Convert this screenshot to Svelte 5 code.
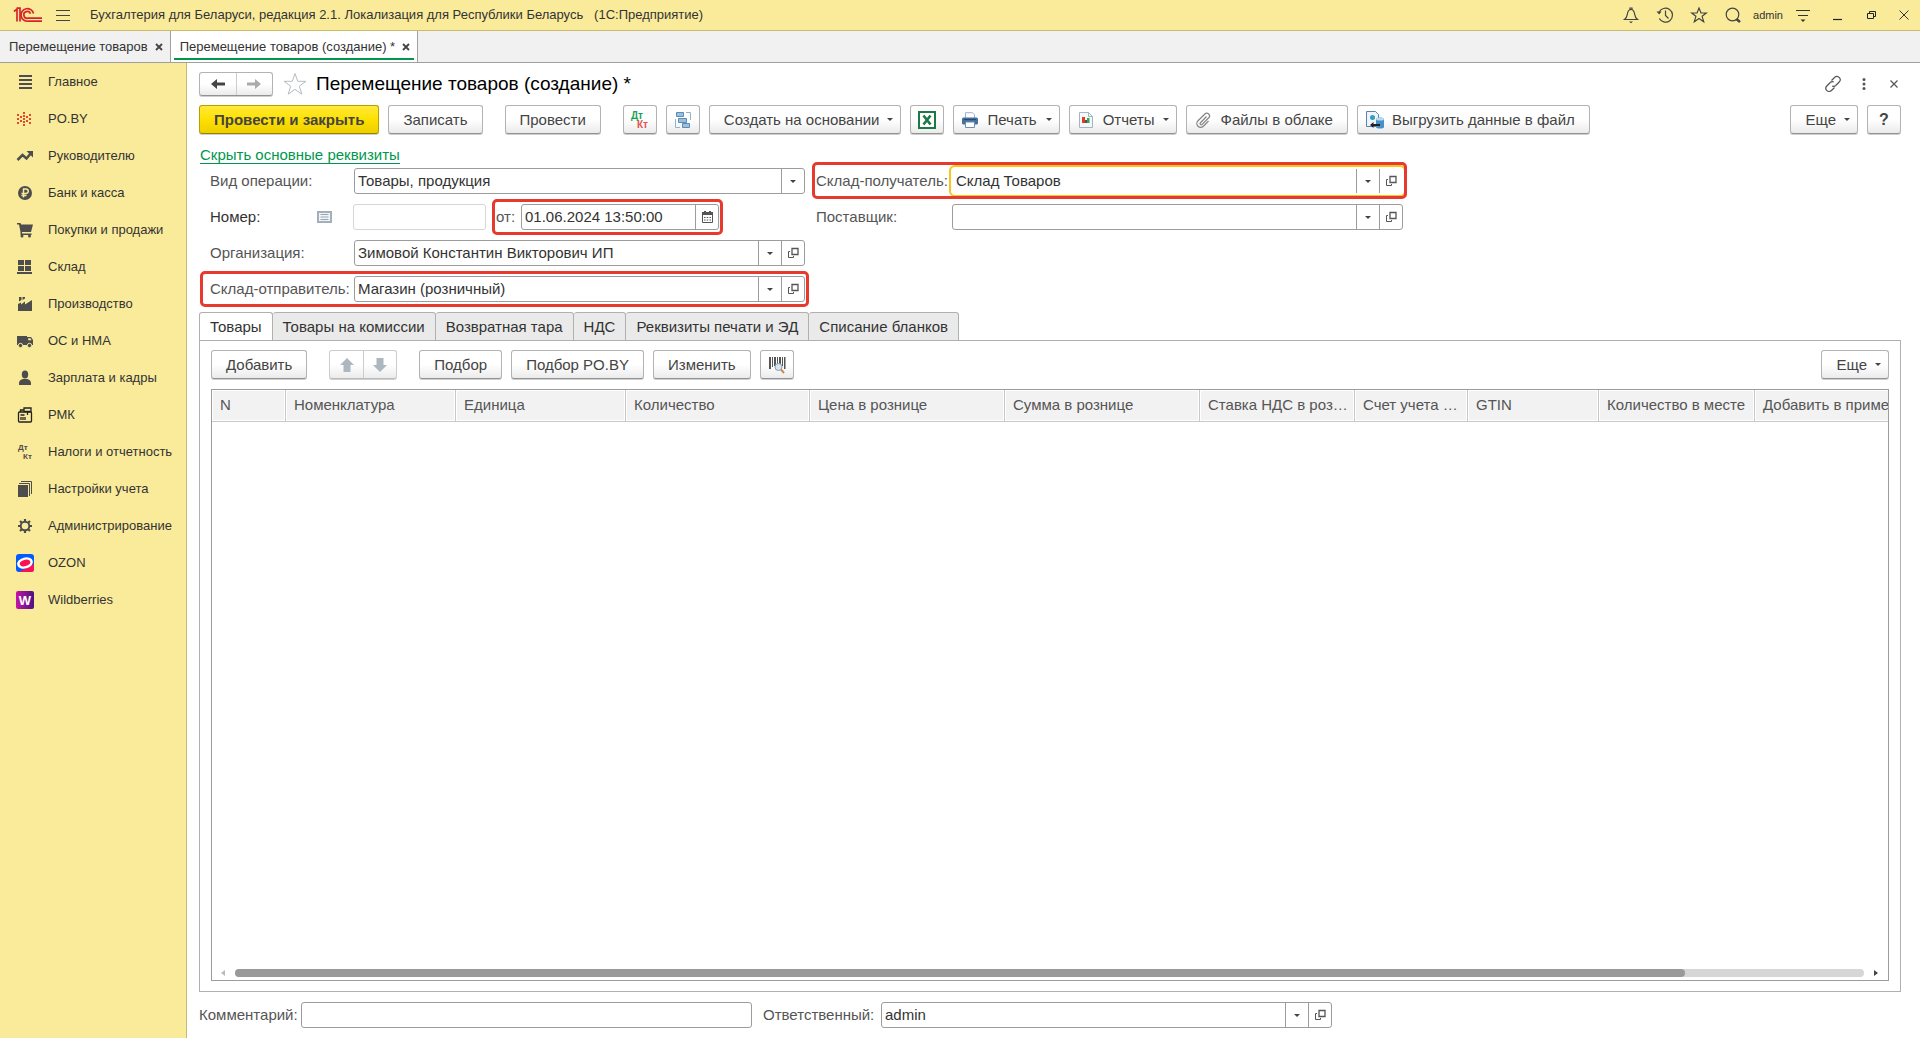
<script>
  const sections = [
    ['main', 'Главное'],
    ['poby', 'PO.BY'],
    ['chart', 'Руководителю'],
    ['ruble', 'Банк и касса'],
    ['cart', 'Покупки и продажи'],
    ['stock', 'Склад'],
    ['factory', 'Производство'],
    ['truck', 'ОС и НМА'],
    ['person', 'Зарплата и кадры'],
    ['till', 'РМК'],
    ['dtkt', 'Налоги и отчетность'],
    ['books', 'Настройки учета'],
    ['gear', 'Администрирование'],
    ['ozon', 'OZON'],
    ['wb', 'Wildberries'],
  ];
  const pages = ['Товары', 'Товары на комиссии', 'Возвратная тара', 'НДС', 'Реквизиты печати и ЭД', 'Списание бланков'];
  const columns = [
    ['N', 74], ['Номенклатура', 170], ['Единица', 170], ['Количество', 184],
    ['Цена в рознице', 195], ['Сумма в рознице', 195], ['Ставка НДС в рознице', 155],
    ['Счет учета НДС', 113], ['GTIN', 131], ['Количество в месте', 156], ['Добавить в примечание', 348],
  ];
  const tableWidth = columns.reduce((sum, c) => sum + c[1], 0);
  let page = $state('Товары');
  let operation = $state('Товары, продукция');
  let date = $state('01.06.2024 13:50:00');
  let organization = $state('Зимовой Константин Викторович ИП');
  let sender = $state('Магазин (розничный)');
  let receiver = $state('Склад Товаров');
  let responsible = $state('admin');
</script>

{#snippet icon(name)}
  {#if name === 'main'}
    <svg width="24" height="24" viewBox="0 0 24 24" fill="#4d4d4d"><path d="M6 5h13v2H6zM6 9h13v2H6zM6 13h13v2H6zM6 17h13v2H6z" /></svg>
  {:else if name === 'poby'}
    <svg width="24" height="24" viewBox="0 0 24 24" fill="#e0492c"><path d="M10 5h2v2h-2zM10 8h2v2h-2zM10 11h2v2h-2zM10 14h2v2h-2zM10 17h2v2h-2zM7 9h2v2H7zM7 13h2v2H7zM13 9h2v2h-2zM13 13h2v2h-2zM4 7h2v2H4zM4 11h2v2H4zM4 15h2v2H4zM16 7h2v2h-2zM16 11h2v2h-2zM16 15h2v2h-2z" /></svg>
  {:else if name === 'chart'}
    <svg width="24" height="24" viewBox="0 0 24 24"><path d="M4.500 16l5-5 4 3.500 5-6" fill="none" stroke="#4d4d4d" stroke-width="2.500" /><path d="M13.500 7H20v6.500z" fill="#4d4d4d" /></svg>
  {:else if name === 'ruble'}
    <svg width="24" height="24" viewBox="0 0 24 24"><circle cx="12" cy="12" r="7" fill="#4d4d4d" /><path d="M10.500 16.500V8h2.500a2.200 2.200 0 0 1 0 4.500H8.500M8.500 14.500h5" fill="none" stroke="#faeb9b" stroke-width="1.500" /></svg>
  {:else if name === 'cart'}
    <svg width="24" height="24" viewBox="0 0 24 24" fill="#4d4d4d"><path d="M4 5h3.500l.6 1.500H20L18 14H9v1.500h9.500V17H7.500v-3L6 6.500H4z" /><circle cx="9" cy="18" r="1.500" /><circle cx="16.500" cy="18" r="1.500" /></svg>
  {:else if name === 'stock'}
    <svg width="24" height="24" viewBox="0 0 24 24" fill="#4d4d4d"><path d="M5 5h6v5H5zM12 5h6v5h-6zM5 11h6v5H5zM12 11h6v5h-6zM4 17h15v2H4z" /></svg>
  {:else if name === 'factory'}
    <svg width="24" height="24" viewBox="0 0 24 24" fill="#4d4d4d"><path d="M5 19v-7l3-1.500V12.500l4-3v3l7-4.500v11zM6 5h2.500v3L6 9.500zM9.500 5H12v1.500L9.500 8z" /></svg>
  {:else if name === 'truck'}
    <svg width="24" height="24" viewBox="0 0 24 24" fill="#4d4d4d"><path d="M4 7h10v9H4zM14 8h4l2 3v5h-6z" /><circle cx="7.500" cy="16.500" r="2.200" stroke="#faeb9b" /><circle cx="16.500" cy="16.500" r="2.200" stroke="#faeb9b" /><path d="M15.200 9.200h2.300l1 2h-3.300z" fill="#faeb9b" /></svg>
  {:else if name === 'person'}
    <svg width="24" height="24" viewBox="0 0 24 24" fill="#4d4d4d"><ellipse cx="12" cy="8.500" rx="3.200" ry="4" /><path d="M6 19v-2c0-2.500 2-3.500 4-4h4c2 .5 4 1.500 4 4v2z" /></svg>
  {:else if name === 'till'}
    <svg width="24" height="24" viewBox="0 0 24 24" fill="none" stroke="#222" stroke-width="1.300"><rect x="5.500" y="9" width="13" height="10" rx="1" /><path d="M11 5h7v3.500h-7zM14.500 8.500V12M7.500 9V7H11M7.500 12h4M8 14v3M10 14v3M12 14v3" /></svg>
  {:else if name === 'dtkt'}
    <svg width="24" height="24" viewBox="0 0 24 24" fill="#4d4d4d" class="mono"><text x="5" y="10">Дт</text><text x="10" y="19">Кт</text></svg>
  {:else if name === 'books'}
    <svg width="24" height="24" viewBox="0 0 24 24" fill="#4d4d4d"><path d="M5 8h10v12H5z" /><path d="M6 6.500h10.500V19M8 4.500h10.500V17" fill="none" stroke="#4d4d4d" /></svg>
  {:else if name === 'gear'}
    <svg width="24" height="24" viewBox="0 0 24 24" fill="none" stroke="#4d4d4d"><circle cx="12" cy="12" r="4.300" stroke-width="2" /><path d="M12 5v2.500M12 16.500V19M5 12h2.500M16.500 12H19M7 7l1.800 1.800M15.200 15.200L17 17M17 7l-1.800 1.800M8.800 15.200L7 17" stroke-width="2.200" /></svg>
  {:else if name === 'ozon'}
    <svg width="24" height="24" viewBox="0 0 24 24"><rect x="3" y="3" width="18" height="18" rx="3" fill="#005bff" /><path d="M21 13v5a3 3 0 0 1-3 3H6z" fill="#f91155" /><ellipse cx="12" cy="12" rx="8" ry="5.500" fill="#fff" transform="rotate(-14 12 12)" /><ellipse cx="12" cy="12" rx="5.500" ry="3.200" fill="#f91155" transform="rotate(-14 12 12)" /></svg>
  {:else if name === 'wb'}
    <svg width="24" height="24" viewBox="0 0 24 24"><defs><linearGradient id="wbg"><stop stop-color="#c713a5" /><stop offset="1" stop-color="#4a1380" /></linearGradient></defs><rect x="3" y="3" width="18" height="18" rx="2" fill="url(#wbg)" /><text x="12" y="17" text-anchor="middle" class="wb">W</text></svg>
  {:else if name === 'drop'}
    <svg width="6" height="3" viewBox="0 0 6 3"><path d="M0 0h6L3 3z" fill="#444" /></svg>
  {:else if name === 'open'}
    <svg width="12" height="12" viewBox="0 0 12 12" fill="none" stroke="#555"><path d="M5 1.500h6v6H5z" stroke-width="1.300" /><path d="M3 4.500H1.500v6h5V9" /></svg>
  {/if}
{/snippet}

{#snippet combo(open)}
  <button class="part" aria-label="Выбрать">{@render icon('drop')}</button>
  {#if open}<button class="part" aria-label="Открыть">{@render icon('open')}</button>{/if}
{/snippet}

<div class="app">
  <header class="titlebar">
    <svg class="logo" width="30" height="16" viewBox="0 0 30 16" fill="none" stroke="#d8232a" stroke-width="1.700"><path d="M1 4.500l3-2.500v12.500M3.500 1.200H7v13.300" /><path d="M20.500 6.500A6.300 6.300 0 1 0 15 14.200h14" /><path d="M17.500 6.800A3.400 3.400 0 1 0 15 11.200h14" /></svg>
    <button class="bare" aria-label="Меню"><svg width="16" height="14" viewBox="0 0 16 14" stroke="#444" stroke-width="1"><path d="M1 2.500h14M1 7.500h14M1 12.500h14" /></svg></button>
    <span class="apptitle">Бухгалтерия для Беларуси, редакция 2.1. Локализация для Республики Беларусь &nbsp; (1С:Предприятие)</span>
    <div class="sys">
      <button class="bare" aria-label="Уведомления"><svg width="20" height="20" viewBox="0 0 20 20" fill="none" stroke="#444" stroke-width="1.200"><path d="M3.500 14.500c2.500-2 2.500-3 3-6C7 5.500 8.500 4.500 10 4.500s3 1 3.500 4c.5 3 .5 4 3 6zM9 4.500V3h2v1.500" /><path d="M8 16.500h4l-2 1.700z" fill="#444" stroke="none" /></svg></button>
      <button class="bare" aria-label="История"><svg width="20" height="20" viewBox="0 0 20 20" fill="none" stroke="#444" stroke-width="1.200"><path d="M4 7.500a7 7 0 1 1 .3 6M10.500 5.500v5l3 3" /><path d="M1.500 6.500h5l-2.300 3z" fill="#444" stroke="none" /></svg></button>
      <button class="bare" aria-label="Избранное"><svg width="20" height="20" viewBox="0 0 20 20" fill="none" stroke="#444" stroke-width="1.200"><path d="M10 3l2 5h5.300l-4.200 3.300 1.600 5.400-4.700-3.200-4.700 3.200 1.600-5.400L2.700 8H8z" /></svg></button>
      <button class="bare" aria-label="Поиск"><svg width="20" height="20" viewBox="0 0 20 20" fill="none" stroke="#444" stroke-width="1.200"><circle cx="9.500" cy="9.500" r="6.300" /><path d="M13.500 14l3.500 3.200" stroke-width="2.500" /></svg></button>
      <button class="bare user">admin</button>
      <button class="bare" aria-label="Настройки"><svg width="16" height="16" viewBox="0 0 16 16"><path d="M1 3.500h14M3 8.500h10" stroke="#333" stroke-width="1.200" /><path d="M5.500 12.500h5L8 15z" fill="#333" /></svg></button>
      <button class="bare" aria-label="Свернуть"><svg width="16" height="16" viewBox="0 0 16 16" stroke="#222"><path d="M4 12.500h9" stroke-width="1.200" /></svg></button>
      <button class="bare" aria-label="Восстановить"><svg width="16" height="16" viewBox="0 0 16 16" fill="none" stroke="#222"><path d="M4.500 6.500h6v5h-6zM6.500 6.500v-2h6v5h-2" /></svg></button>
      <button class="bare last" aria-label="Закрыть"><svg width="16" height="16" viewBox="0 0 16 16" stroke="#333"><path d="M3.500 3.500l9 9M12.500 3.500l-9 9" /></svg></button>
    </div>
  </header>

  <nav class="windows">
    <div class="win"><a href="#list">Перемещение товаров</a><button class="bare" aria-label="Закрыть вкладку"><svg width="8" height="8" viewBox="0 0 8 8" stroke="#444" stroke-width="1.800"><path d="M1 1l6 6M7 1L1 7" /></svg></button></div>
    <div class="win current"><a href="#new">Перемещение товаров (создание) *</a><button class="bare" aria-label="Закрыть вкладку"><svg width="8" height="8" viewBox="0 0 8 8" stroke="#444" stroke-width="1.800"><path d="M1 1l6 6M7 1L1 7" /></svg></button></div>
  </nav>

  <div class="body">
    <nav class="sections">
      {#each sections as [name, title]}
        <a href="#{name}">{@render icon(name)}<span>{title}</span></a>
      {/each}
    </nav>

    <main>
      <div class="heading">
        <div class="pair nav">
          <button aria-label="Назад"><svg width="14" height="12" viewBox="0 0 14 12" fill="#444"><path d="M0 6l6-5v3.500h8v3H6V11z" /></svg></button>
          <button aria-label="Вперед"><svg width="14" height="12" viewBox="0 0 14 12" fill="#aaa"><path d="M14 6L8 1v3.500H0v3h8V11z" /></svg></button>
        </div>
        <button class="bare" aria-label="В избранное"><svg width="24" height="24" viewBox="0 0 24 24" fill="none" stroke="#b4bcc4"><path d="M12 1.500l2.700 7.800H23l-6.700 4.900 2.500 8-6.800-4.900-6.800 4.900 2.500-8L1 9.300h8.300z" /></svg></button>
        <h1>Перемещение товаров (создание) *</h1>
        <div class="formtools">
          <button class="bare" aria-label="Ссылка"><svg width="18" height="18" viewBox="0 0 18 18" fill="none" stroke="#555" stroke-width="1.200"><path d="M7.500 5.500l3-3a3.200 3.200 0 0 1 4.700 4.500l-3.500 3.500a3 3 0 0 1-3.500.4M10.500 12.500l-3 3A3.200 3.200 0 0 1 2.800 11l3.500-3.500a3 3 0 0 1 3.500-.4" /></svg></button>
          <button class="bare" aria-label="Действия"><svg width="4" height="12" viewBox="0 0 4 12" fill="#555"><circle cx="2" cy="1.500" r="1.500" /><circle cx="2" cy="6" r="1.500" /><circle cx="2" cy="10.500" r="1.500" /></svg></button>
          <button class="bare" aria-label="Закрыть форму"><svg width="8" height="8" viewBox="0 0 8 8" stroke="#555" stroke-width="1.200"><path d="M.5 .5l7 7M7.500 .5l-7 7" /></svg></button>
        </div>
      </div>

      <div class="bar">
        <button class="btn primary">Провести и закрыть</button>
        <button class="btn">Записать</button>
        <button class="btn apart">Провести</button>
        <button class="btn square apart" aria-label="Дебет и кредит"><svg width="20" height="20" viewBox="0 0 20 20" class="dk"><text x="1" y="9" fill="#1a9f57">Дт</text><text x="7" y="18" fill="#e2574c">Кт</text></svg></button>
        <button class="btn square" aria-label="Структура подчиненности"><svg width="18" height="18" viewBox="0 0 18 18" fill="#9cc0dc" stroke="#5b8db8"><path d="M2.500 1.500h7v4h-7zM4.500 7.500h8v4h-8zM8.500 12.500h7v4h-7z" /><path d="M1.500 8v8.500H6M12 1.500h4.500V9" fill="none" stroke="#8fb4d0" /></svg></button>
        <button class="btn menu">Создать на основании {@render icon('drop')}</button>
        <button class="btn square" aria-label="Excel"><svg width="18" height="18" viewBox="0 0 18 18"><rect x="1" y="1" width="16" height="16" fill="#fff" stroke="#1d7a47" stroke-width="2" /><path d="M5.500 4.500l7 9M12.500 4.500l-7 9" stroke="#1d7a47" stroke-width="2.600" /></svg></button>
        <button class="btn menu pic"><svg width="16" height="16" viewBox="0 0 16 16"><path d="M3.500 6V.7h7l2 2V6" fill="#fff" stroke="#9db3c8" /><rect y="5.500" width="16" height="7" rx="1.500" fill="#456f9c" /><path d="M3.500 10h9v5.500h-9z" fill="#fff" stroke="#6e8fb0" /><path d="M2 7.500h12" stroke="#274a70" /></svg><span>Печать</span> {@render icon('drop')}</button>
        <button class="btn menu pic"><svg width="16" height="16" viewBox="0 0 16 16"><path d="M1.500 .5h9l4 4v11h-13z" fill="#f4f8fb" stroke="#a3b4c2" /><path d="M10.500 .5v4h4" fill="none" stroke="#a3b4c2" /><path d="M4 5h3v6H4z" fill="#e8372c" /><path d="M7 8h2v3H7z" fill="#4a5560" /><path d="M9 6h2.500v5H9z" fill="#2dab45" /></svg><span>Отчеты</span> {@render icon('drop')}</button>
        <button class="btn pic"><svg width="16" height="16" viewBox="0 0 16 16" fill="none" stroke="#888" stroke-width="1.300"><path d="M11.500 4.500l-6 6.200a1.200 1.200 0 0 0 1.700 1.700l6.500-6.600a2.600 2.600 0 0 0-3.800-3.800L3 8.800a3.800 3.800 0 0 0 5.400 5.400l5.100-5.200" /></svg><span>Файлы в облаке</span></button>
        <button class="btn pic tight"><svg width="18" height="18" viewBox="0 0 18 18"><path d="M.5 .5h9l3 3v12H.5z" fill="#eef4f9" stroke="#5b83a8" /><circle cx="6.500" cy="6.500" r="2.500" fill="#2f9ad6" /><path d="M6 6l3-1v3z" fill="#49b35b" /><path d="M10 8c0-2 8-2 8 0v8c0 2-8 2-8 0z" fill="#4a90c8" /><ellipse cx="14" cy="8" rx="4" ry="1.500" fill="#b8dcf2" /><path d="M4 14l3.500-3v2H14v2H7.500v2z" fill="#222" /></svg><span>Выгрузить данные в файл</span></button>
        <button class="btn menu end">Еще {@render icon('drop')}</button>
        <button class="btn square help">?</button>
      </div>

      <a class="toggle" href="#details">Скрыть основные реквизиты</a>

      <div class="form">
        <div class="row left">
          <label for="operation">Вид операции:</label>
          <div class="field">
            <select id="operation" bind:value={operation}><option>Товары, продукция</option></select>
            <span class="part hint">{@render icon('drop')}</span>
          </div>
        </div>
        <div class="row right marked">
          <label for="receiver">Склад-получатель:</label>
          <div class="field focused"><input id="receiver" bind:value={receiver} />{@render combo(true)}</div>
        </div>
        <div class="row left">
          <label class="dark" for="number">Номер:</label>
          <button class="bare numpick" aria-label="Нумерация"><svg width="15" height="12" viewBox="0 0 15 12"><path d="M1 1h13v10H1z" fill="#f2f5f7" stroke="#a3afba" stroke-width="2" /><path d="M3.500 3.500h8M3.500 6h8M3.500 8.500h8" stroke="#98a6b3" /></svg></button>
          <div class="field pale number"><input id="number" /></div>
          <div class="row date marked">
            <label for="date">от:</label>
            <div class="field"><input id="date" bind:value={date} /><button class="part" aria-label="Календарь"><svg width="11" height="12" viewBox="0 0 11 12"><path d="M.5 1.500h10v10H.5z" fill="#fff" stroke="#555" /><path d="M0 1h11v3H0zM2 0h2v2H2zM7 0h2v2H7z" fill="#555" /><path d="M2 6.500h1.500M4.700 6.500h1.500M7.500 6.500H9M2 9h1.500M4.700 9h1.500M7.500 9H9" stroke="#555" /></svg></button></div>
          </div>
        </div>
        <div class="row right">
          <label for="supplier">Поставщик:</label>
          <div class="field"><input id="supplier" />{@render combo(true)}</div>
        </div>
        <div class="row left">
          <label for="organization">Организация:</label>
          <div class="field"><input id="organization" bind:value={organization} />{@render combo(true)}</div>
        </div>
        <div class="row left sender marked">
          <label for="sender">Склад-отправитель:</label>
          <div class="field"><input id="sender" bind:value={sender} />{@render combo(true)}</div>
        </div>
      </div>

      <div class="tabs" role="tablist">
        {#each pages as title}
          <button role="tab" aria-selected={page === title} class:active={page === title} onclick={() => (page = title)}>{title}</button>
        {/each}
      </div>

      <section class="pane">
        <div class="bar">
          <button class="btn">Добавить</button>
          <div class="pair move apart">
            <button aria-label="Вверх"><svg width="14" height="14" viewBox="0 0 14 14" fill="#adb7bf"><path d="M7 0l7 7h-3.500v7h-7V7H0z" /></svg></button>
            <button aria-label="Вниз"><svg width="14" height="14" viewBox="0 0 14 14" fill="#adb7bf"><path d="M7 14L0 7h3.500V0h7v7H14z" /></svg></button>
          </div>
          <button class="btn apart">Подбор</button>
          <button class="btn">Подбор PO.BY</button>
          <button class="btn">Изменить</button>
          <button class="btn square" aria-label="Штрихкод"><svg width="18" height="18" viewBox="0 0 18 18"><path d="M1 1h2v12H1zM4 1h1v10H4zM6 1h2v9H6zM9 1h1v7H9zM11 1h2v7h-2zM14 1h1v9h-1zM16 1h1.500v12H16z" fill="#555" /><circle cx="10.500" cy="11" r="3.500" fill="#d7e6f2" stroke="#8a9cad" /><path d="M13 13.500l3 3.500" stroke="#c98a54" stroke-width="2" /></svg></button>
          <button class="btn menu end">Еще {@render icon('drop')}</button>
        </div>
        <div class="grid">
          <div class="view">
            <table style:width="{tableWidth}px">
              <colgroup>{#each columns as [, width]}<col style:width="{width}px" />{/each}</colgroup>
              <thead><tr>{#each columns as [title]}<th>{title}</th>{/each}</tr></thead>
              <tbody></tbody>
            </table>
          </div>
          <div class="scroll">
            <svg width="4" height="8" viewBox="0 0 4 8" fill="#bbb"><path d="M4 1v6L0 4z" /></svg>
            <div class="track"><div class="thumb"></div></div>
            <svg width="4" height="8" viewBox="0 0 4 8" fill="#444"><path d="M0 1v6l4-3z" /></svg>
          </div>
        </div>
      </section>

      <footer>
        <label for="comment">Комментарий:</label>
        <div class="field"><input id="comment" /></div>
        <label class="second" for="responsible">Ответственный:</label>
        <div class="field"><input id="responsible" bind:value={responsible} />{@render combo(true)}</div>
      </footer>
    </main>
  </div>
</div>

<style>
  :global(body) { background: #fff; }
  .app { min-height: 100vh; display: flex; flex-direction: column; font: 15px/18px "Liberation Sans", Arial, sans-serif; color: #333; }
  .app * { box-sizing: border-box; }
  svg { display: block; flex: none; }
  button, input, select { font: inherit; color: inherit; margin: 0; }
  button { cursor: pointer; }
  a { color: inherit; text-decoration: none; }
  .bare { border: 0; padding: 0; background: none; display: flex; align-items: center; justify-content: center; }

  .titlebar { height: 31px; background: #faeb9b; border-bottom: 1px solid #c9bb6e; display: flex; align-items: center; padding-left: 13px; font-size: 13px; }
  .logo { margin-right: 12px; }
  .apptitle { margin-left: 19px; white-space: pre; }
  .sys { margin-left: auto; display: flex; align-items: center; }
  .sys button { width: 34px; height: 30px; }
  .sys .user { width: 36px; font-size: 11px; }
  .sys .last { width: 32px; }

  .windows { height: 32px; background: #f1f1f1; border-bottom: 1px solid #a0a0a0; display: flex; font-size: 13px; }
  .win { display: flex; align-items: center; gap: 7px; padding: 0 7px 0 9px; border-right: 1px solid #a0a0a0; position: relative; }
  .win.current { background: #fff; }
  .win.current::after { content: ""; position: absolute; left: 3px; right: 3px; bottom: 2px; height: 2px; background: #00974d; }

  .body { flex: 1; display: flex; }
  .sections { width: 187px; flex: none; background: #faeb9b; border-right: 1px solid #c9bb6e; font-size: 13px; }
  .sections a { height: 37px; display: flex; align-items: center; gap: 11px; padding-left: 13px; white-space: nowrap; }
  .mono { font: bold 8px "Liberation Sans", sans-serif; }
  .dk { font: bold 10px "Liberation Sans", sans-serif; }
  .wb { font: bold 13px "Liberation Sans", sans-serif; fill: #fff; }

  main { flex: 1; min-width: 0; display: flex; flex-direction: column; padding: 8px 19px 10px 12px; }
  .heading { display: flex; align-items: center; height: 25px; margin-bottom: 9px; }
  h1 { font-size: 19px; line-height: 24px; font-weight: 400; color: #000; margin: 0 0 0 9px; }
  .heading > .bare { margin-left: 10px; }
  .formtools { margin-left: auto; display: flex; align-items: center; gap: 24px; padding-right: 3px; }
  .formtools button:first-child { margin-right: -4px; }

  .bar { display: flex; gap: 9px; align-items: flex-start; height: 30px; flex: none; }
  .btn, .pair { height: 29px; border: 1px solid #b3b3b3; border-bottom-color: #929292; border-radius: 3px; background: linear-gradient(#fff 50%, #ebebeb); box-shadow: 0 1px 0 #cfcfcf; color: #444; white-space: nowrap; flex: none; }
  .btn { padding: 0 14px; display: flex; align-items: center; justify-content: center; }
  .primary { font-weight: 700; background: linear-gradient(#ffea3a, #fee000 50%, #edcf00); border-color: #b79f00; border-bottom-color: #978300; }
  .apart { margin-left: 13px; }
  .square { width: 34px; padding: 0; }
  .menu { gap: 8px; padding-right: 7px; }
  .pic { padding-left: 8px; gap: 9px; }
  .tight { gap: 8px; }
  .end { margin-left: auto; }
  .help { font-weight: 700; font-size: 16px; }
  .pair { display: flex; }
  .pair button { flex: 1; border: 0; padding: 0; background: none; display: flex; align-items: center; justify-content: center; }
  .pair button + button { border-left: 1px solid #ccc; }
  .nav { width: 74px; height: 24px; }
  .move { width: 68px; border-color: #ccc; border-bottom-color: #bbb; }

  .toggle { align-self: flex-start; margin: 11px 0 4px 1px; color: #00974d; border-bottom: 1px solid #00974d; line-height: 17px; }
  .form { display: grid; grid-template-columns: 595px 587px; gap: 10px 11px; padding-left: 11px; }
  .row { display: flex; align-items: center; position: relative; }
  label { color: #555; white-space: nowrap; }
  label.dark { color: #333; }
  .left > label { width: 144px; }
  .right > label { width: 136px; }
  .left > label.dark { width: 107px; }
  .numpick { width: 15px; margin-right: 21px; }
  .sender { grid-column: 1; }
  .field { flex: 1; min-width: 0; height: 26px; display: flex; border: 1px solid #9c9c9c; border-radius: 3px; background: #fff; }
  .field input, .field select { flex: 1; min-width: 0; width: 0; border: 0; padding: 0 3px; background: none; outline: 0; appearance: none; }
  .part { width: 23px; border: 0; border-left: 1px solid #9c9c9c; padding: 0; background: none; display: flex; align-items: center; justify-content: center; }
  .hint { pointer-events: none; }
  .pale { border-color: #d6d6d6; }
  .number { flex: none; width: 133px; }
  .focused { border-color: transparent; outline: 2px solid #f8c51c; outline-offset: 1px; }
  .date { margin-left: 10px; }
  .date > label { width: 25px; }
  .date .field { flex: none; width: 198px; }
  .marked::after { content: ""; position: absolute; inset: -5px -4px; border: 3px solid #e8392f; border-radius: 5px; pointer-events: none; }
  .marked.right::after { inset: -6px -4px -5px; }
  .sender.marked::after { left: -10px; }

  .tabs { display: flex; margin-top: 10px; height: 29px; margin-bottom: -1px; }
  .tabs button { height: 29px; padding: 0 10px; border: 1px solid #b0b0b0; border-left-width: 0; border-radius: 3px 3px 0 0; background: #eaeaea; white-space: nowrap; }
  .tabs button:first-child { border-left-width: 1px; }
  .tabs .active { background: #fff; border-bottom-color: #fff; }
  .pane { flex: 1; display: flex; flex-direction: column; border: 1px solid #b0b0b0; padding: 9px 11px 10px; }
  .grid { flex: 1; margin-top: 9px; border: 1px solid #9c9c9c; display: flex; flex-direction: column; min-width: 0; }
  .view { flex: 1; width: 0; min-width: 100%; overflow: hidden; }
  table { border-collapse: separate; border-spacing: 0; table-layout: fixed; }
  th { height: 32px; padding: 0 5px 2px 8px; font-weight: 400; text-align: left; color: #555; background: #f2f2f2; border-right: 1px solid #c8c8c8; border-bottom: 1px solid #c8c8c8; box-shadow: inset 0 0 0 1px #fff; white-space: nowrap; overflow: hidden; text-overflow: ellipsis; }
  .scroll { display: flex; align-items: center; gap: 10px; padding: 0 10px 3px 9px; }
  .track { flex: 1; height: 8px; border-radius: 4px; background: #d6d6d6; }
  .thumb { width: 89%; height: 8px; border-radius: 4px; background: #999; }

  footer { display: flex; align-items: center; margin-top: 10px; }
  footer .field { flex: 0 0 451px; }
  footer label { width: 102px; }
  footer .second { width: 118px; margin-left: 11px; }
</style>
